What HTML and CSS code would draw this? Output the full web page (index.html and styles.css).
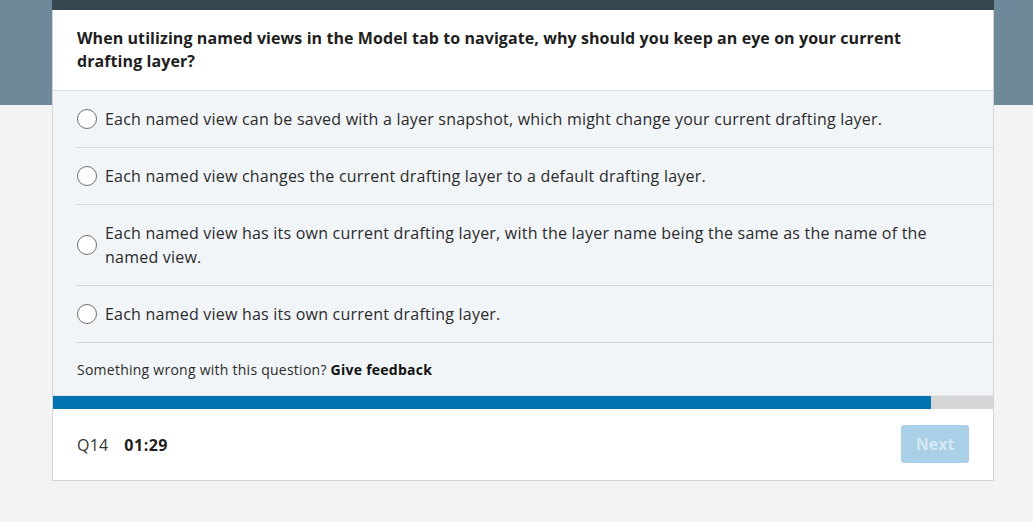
FILE: index.html
```html
<!DOCTYPE html>
<html>
<head>
<meta charset="utf-8">
<link rel="stylesheet" href="styles.css">
</head>
<body>
<div class="band"></div>
<div class="page">
  <div class="card">
    <div class="topstrip"></div>
    <div class="question">When utilizing named views in the Model tab to navigate, why should you keep an eye on your current drafting layer?</div>
    <div class="options">
      <label class="option"><span class="radio"></span><span class="otext">Each named view can be saved with a layer snapshot, which might change your current drafting layer.</span></label>
      <label class="option"><span class="radio"></span><span class="otext">Each named view changes the current drafting layer to a default drafting layer.</span></label>
      <label class="option"><span class="radio"></span><span class="otext">Each named view has its own current drafting layer, with the layer name being the same as the name of the named view.</span></label>
      <label class="option"><span class="radio"></span><span class="otext">Each named view has its own current drafting layer.</span></label>
    </div>
    <div class="feedback">Something wrong with this question? <b>Give feedback</b></div>
    <div class="progress"><div class="fill" style="width: 93.4%"></div></div>
    <div class="footer">
      <div class="meta"><span class="qnum">Q14</span><span class="timer">01:29</span></div>
      <button class="next">Next</button>
    </div>
  </div>
</div>
</body>
</html>
```
FILE: styles.css
```css
html, body {
  margin: 0;
  padding: 0;
}
body {
  background: #f3f3f3;
  font-family: "Open Sans", "Noto Sans", sans-serif;
  color: #222;
  position: relative;
  min-height: 522px;
}
.band {
  position: absolute;
  left: 0;
  top: 0;
  right: 0;
  height: 105px;
  background: #6e8999;
}
.page {
  position: relative;
  padding: 0 39px 0 52px;
}
.card {
  width: 942px;
  background: #fff;
  border: 1px solid #d4d4d4;
  border-top: none;
  box-sizing: border-box;
}
.topstrip {
  height: 10px;
  background: #36474f;
  margin: 0 -1px;
}
.question {
  padding: 17px 24px 17px 24px;
  font-size: 16px;
  font-weight: 700;
  line-height: 23px;
  letter-spacing: 0.08px;
  color: #1e1e1e;
  border-bottom: 1px solid #d9dde1;
}
.options {
  background: #f2f5f8;
}
.option {
  display: flex;
  align-items: center;
  margin-left: 23px;
  padding: 16px 0 16px 0;
  min-height: 24px;
  border-bottom: 1px solid #d6d9dc;
  cursor: pointer;
}
.radio {
  flex: none;
  width: 18px;
  height: 18px;
  border: 1px solid #6e6e6e;
  border-radius: 50%;
  background: #fff;
  margin-right: 8px;
  margin-left: 1px;
}
.otext {
  font-size: 16px;
  line-height: 24px;
  letter-spacing: 0.22px;
  color: #2b2b2b;
  padding-right: 40px;
}
.feedback {
  background: #f2f5f8;
  padding: 16px 24px 15px;
  font-size: 14px;
  line-height: 21px;
  letter-spacing: 0.25px;
  color: #2b2b2b;
}
.feedback b {
  color: #111;
}
.progress {
  height: 13px;
  background: #d6d6d6;
  border-top: 1px solid #e2e6ea;
}
.fill {
  height: 100%;
  background: #0073b0;
}
.footer {
  display: flex;
  align-items: center;
  justify-content: space-between;
  padding: 16px 24px 17px 24px;
  height: 38px;
}
.meta {
  font-size: 16px;
  line-height: 20px;
  color: #333;
  letter-spacing: 0.2px;
  margin-top: 2px;
}
.qnum {
  margin-right: 16px;
}
.timer {
  font-weight: 700;
  letter-spacing: 0.5px;
  color: #1e1e1e;
}
.next {
  border: none;
  border-radius: 3px;
  background: #a9d0e6;
  color: #d5e9f4;
  font-family: inherit;
  font-size: 16px;
  font-weight: 700;
  width: 68px;
  height: 38px;
  padding: 0;
}
```
